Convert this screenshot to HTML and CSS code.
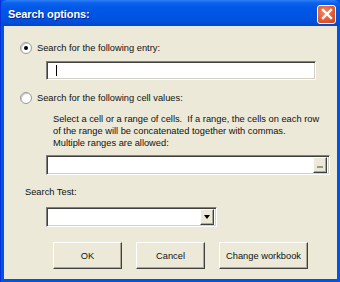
FILE: index.html
```html
<!DOCTYPE html>
<html lang="en">

<head>
    <meta charset="UTF-8">
    <title>Search options</title>
    <link rel="stylesheet" href="styles.css">
</head>

<body>
    <div class="window">
        <!-- Title Bar -->
        <div class="titlebar">
            <span class="title">Search options:</span>
            <span class="close">
                <svg width="12" height="12" viewBox="0 0 12 12">
                    <path d="M2 2 L10 10 M10 2 L2 10" stroke="#fff" stroke-width="2.4" stroke-linecap="square" />
                </svg>
            </span>
        </div>

        <div class="content">
            <!-- Entry option -->
            <label class="radio-row">
                <span class="radio checked"></span>
                <span>Search for the following entry:</span>
            </label>
            <div class="textbox entry"><span class="caret"></span></div>

            <!-- Cell values option -->
            <label class="radio-row second">
                <span class="radio"></span>
                <span>Search for the following cell values:</span>
            </label>
            <p class="hint">
                Select a cell or a range of cells.&nbsp; If a range, the cells on each row<br>
                of the range will be concatenated together with commas.<br>
                Multiple ranges are allowed:
            </p>
            <div class="textbox range">
                <span class="ref-btn"><span class="dash"></span></span>
            </div>

            <!-- Search test -->
            <div class="field-label">Search Test:</div>
            <div class="textbox combo">
                <span class="drop-btn"><span class="arrow"></span></span>
            </div>

            <!-- Buttons -->
            <div class="buttons">
                <button class="btn ok">OK</button>
                <button class="btn cancel">Cancel</button>
                <button class="btn change">Change workbook</button>
            </div>
        </div>
    </div>
</body>

</html>
```

FILE: styles.css
```css
body {
    margin: 0;
    padding: 0;
    font-family: 'Liberation Sans', Arial, sans-serif;
    font-size: 9.3px;
    color: #111;
}

.window {
    width: 340px;
    height: 282px;
    box-sizing: border-box;
    background: #0054e3;
    padding: 0 3px 3px 3px;
    display: flex;
    flex-direction: column;
    border-left: 1px solid #0831d9;
}

.titlebar {
    height: 26px;
    margin: 0 -3px;
    padding: 0 4px 0 7px;
    display: flex;
    align-items: center;
    justify-content: space-between;
    background: linear-gradient(#2f7ff5 0px, #0a61ee 3px, #0058e6 8px, #0055e3 16px, #004fd9 22px, #0047cf 26px);
    border-radius: 6px 6px 0 0;
}

.title {
    color: #fff;
    font-weight: bold;
    font-size: 11px;
    text-shadow: 1px 1px 0 #0a1e8a;
    letter-spacing: -0.1px;
    margin-top: 1px;
}

.close {
    width: 17px;
    height: 17px;
    border: 1px solid #fff;
    border-radius: 3px;
    background: radial-gradient(circle at 40% 35%, #f08a6a, #e2582f 60%, #c8421d);
    display: flex;
    align-items: center;
    justify-content: center;
    margin-top: 2px;
}

.content {
    flex: 1;
    background: #ece9d8;
    padding: 16px 0 0 0;
}

.radio-row {
    display: flex;
    align-items: center;
    height: 12px;
    margin-left: 16px;
    gap: 5px;
}

.radio-row.second {
    margin-top: 12px;
}

.radio {
    width: 10px;
    height: 10px;
    border-radius: 50%;
    background: #fff;
    border: 1px solid #9a9a9a;
    box-shadow: inset 1px 1px 0 #c8c8c8;
    position: relative;
}

.radio.checked::after {
    content: "";
    position: absolute;
    left: 3px;
    top: 3px;
    width: 4px;
    height: 4px;
    border-radius: 50%;
    background: #000;
}

.textbox {
    box-sizing: border-box;
    background: #fff;
    border-top: 1px solid #808080;
    border-left: 1px solid #808080;
    border-right: 1px solid #fff;
    border-bottom: 1px solid #fff;
    box-shadow: inset 1px 1px 0 #404040, inset -1px -1px 0 #d4d0c8;
    display: flex;
    align-items: center;
}

.textbox.entry {
    margin: 7px 0 0 42px;
    width: 270px;
    height: 19px;
}

.caret {
    width: 1px;
    height: 11px;
    background: #000;
    margin-left: 9px;
}

.hint {
    margin: 9px 0 0 49px;
    line-height: 12px;
}

.textbox.range {
    margin: 6px 0 0 42px;
    width: 284px;
    height: 20px;
    justify-content: flex-end;
    padding: 2px;
}

.ref-btn,
.drop-btn {
    width: 14px;
    height: 16px;
    box-sizing: border-box;
    background: #ece9d8;
    border-top: 1px solid #fff;
    border-left: 1px solid #fff;
    border-right: 1px solid #404040;
    border-bottom: 1px solid #404040;
    box-shadow: inset -1px -1px 0 #aca899;
    display: flex;
    align-items: flex-end;
    justify-content: center;
}

.dash {
    width: 6px;
    height: 2px;
    background: #9a9a8a;
    margin-bottom: 4px;
}

.field-label {
    margin: 11px 0 0 21px;
    height: 12px;
    line-height: 12px;
}

.textbox.combo {
    margin: 9px 0 0 42px;
    width: 171px;
    height: 20px;
    justify-content: flex-end;
    padding: 2px;
}

.drop-btn {
    align-items: center;
}

.arrow {
    width: 0;
    height: 0;
    border-left: 3.5px solid transparent;
    border-right: 3.5px solid transparent;
    border-top: 4px solid #000;
}

.buttons {
    display: flex;
    margin: 15px 0 0 49px;
    gap: 14px;
}

.btn {
    height: 27px;
    box-sizing: border-box;
    background: #ece9d8;
    font-family: 'Liberation Sans', Arial, sans-serif;
    font-size: 9.3px;
    color: #111;
    border-top: 1px solid #fff;
    border-left: 1px solid #fff;
    border-right: 1px solid #404040;
    border-bottom: 1px solid #404040;
    box-shadow: inset -1px -1px 0 #aca899;
    padding: 0;
}

.btn.ok,
.btn.cancel {
    width: 69px;
}

.btn.change {
    width: 89px;
}
```
